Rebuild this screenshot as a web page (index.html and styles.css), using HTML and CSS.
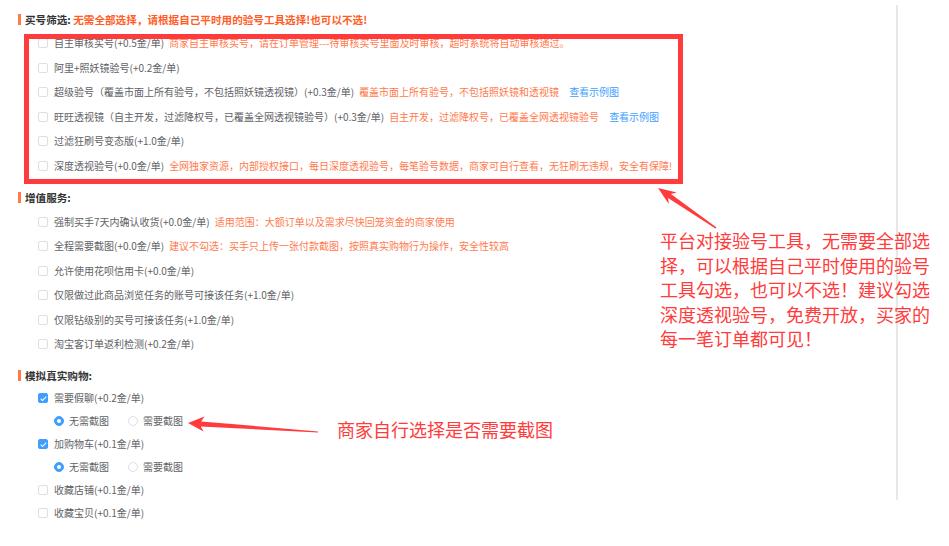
FILE: index.html
```html
<!DOCTYPE html>
<html lang="zh-CN">
<head>
    <meta charset="UTF-8">
    <meta name="viewport" content="width=device-width, initial-scale=1.0">
    <title>任务设置</title>
    <link rel="stylesheet" href="styles.css">
</head>
<body>
    <div class="page">
        <div class="panel">
            <div class="section">
                <div class="section-title">买号筛选: <span class="title-tip">无需全部选择，请根据自己平时用的验号工具选择!也可以不选!</span></div>
                <div class="option"><span class="check"></span><span class="label">自主审核买号(+0.5金/单)</span><span class="note">商家自主审核买号，请在订单管理---待审核买号里面及时审核，超时系统将自动审核通过。</span></div>
                <div class="option"><span class="check"></span><span class="label">阿里+照妖镜验号(+0.2金/单)</span></div>
                <div class="option"><span class="check"></span><span class="label">超级验号（覆盖市面上所有验号，不包括照妖镜透视镜）(+0.3金/单)</span><span class="note">覆盖市面上所有验号，不包括照妖镜和透视镜</span><a class="link" href="#">查看示例图</a></div>
                <div class="option"><span class="check"></span><span class="label">旺旺透视镜（自主开发，过滤降权号，已覆盖全网透视镜验号）(+0.3金/单)</span><span class="note">自主开发，过滤降权号，已覆盖全网透视镜验号</span><a class="link" href="#">查看示例图</a></div>
                <div class="option"><span class="check"></span><span class="label">过滤狂刷号变态版(+1.0金/单)</span></div>
                <div class="option"><span class="check"></span><span class="label">深度透视验号(+0.0金/单)</span><span class="note">全网独家资源，内部授权接口，每日深度透视验号，每笔验号数据，商家可自行查看，无狂刷无违规，安全有保障!</span></div>
            </div>

            <div class="section">
                <div class="section-title">增值服务:</div>
                <div class="option"><span class="check"></span><span class="label">强制买手7天内确认收货(+0.0金/单)</span><span class="note">适用范围：大额订单以及需求尽快回笼资金的商家使用</span></div>
                <div class="option"><span class="check"></span><span class="label">全程需要截图(+0.0金/单)</span><span class="note">建议不勾选：买手只上传一张付款截图，按照真实购物行为操作，安全性较高</span></div>
                <div class="option"><span class="check"></span><span class="label">允许使用花呗信用卡(+0.0金/单)</span></div>
                <div class="option"><span class="check"></span><span class="label">仅限做过此商品浏览任务的账号可接该任务(+1.0金/单)</span></div>
                <div class="option"><span class="check"></span><span class="label">仅限钻级别的买号可接该任务(+1.0金/单)</span></div>
                <div class="option"><span class="check"></span><span class="label">淘宝客订单返利检测(+0.2金/单)</span></div>
            </div>

            <div class="section section-compact">
                <div class="section-title">模拟真实购物:</div>
                <div class="option"><span class="check checked"></span><span class="label">需要假聊(+0.2金/单)</span></div>
                <div class="option radio-row">
                    <span class="radio-item"><span class="radio checked"></span>无需截图</span>
                    <span class="radio-item"><span class="radio"></span>需要截图</span>
                </div>
                <div class="option"><span class="check checked"></span><span class="label">加购物车(+0.1金/单)</span></div>
                <div class="option radio-row">
                    <span class="radio-item"><span class="radio checked"></span>无需截图</span>
                    <span class="radio-item"><span class="radio"></span>需要截图</span>
                </div>
                <div class="option"><span class="check"></span><span class="label">收藏店铺(+0.1金/单)</span></div>
                <div class="option"><span class="check"></span><span class="label">收藏宝贝(+0.1金/单)</span></div>
            </div>
        </div>
        <div class="divider"></div>

        <!-- annotations drawn over the page -->
        <div class="mark-box"></div>
        <div class="callout callout-tools">平台对接验号工具，无需要全部选<br>择，可以根据自己平时使用的验号<br>工具勾选，也可以不选！建议勾选<br>深度透视验号，免费开放，买家的<br>每一笔订单都可见！</div>
        <div class="callout callout-shot">商家自行选择是否需要截图</div>
        <svg class="arrows" width="949" height="546" viewBox="0 0 949 546">
            <polygon points="658,188 676.8,192.4 670.9,193.9 716.6,227.6 715.4,228.4 668.1,198.1 668.8,204" />
            <polygon points="188,423 204.5,416.6 201.2,421.4 318,431.4 318,432.6 200.8,426.4 203.5,431.6" />
        </svg>
    </div>
</body>
</html>
```

FILE: styles.css
```css
body {
    margin: 0;
    background-color: #fff;
    font-family: "Noto Sans CJK SC", "Noto Sans", sans-serif;
    font-size: 10px;
    color: #606266;
}
.page {
    position: relative;
    display: flex;
    width: 949px;
    height: 546px;
    overflow: hidden;
}
.panel {
    width: 896px;
    padding: 7px 0 0 18px;
    box-sizing: border-box;
}
.divider {
    width: 2px;
    height: 495px;
    margin-top: 5px;
    background-color: #e8e8e8;
}
.section + .section {
    margin-top: 7.5px;
}
.section-title {
    display: flex;
    align-items: center;
    height: 24px;
    font-size: 10.6px;
    font-weight: bold;
    color: #333;
    white-space: pre;
}
.section-title::before {
    content: "";
    width: 3px;
    height: 11px;
    margin-right: 4px;
    background-color: #ff7a45;
}
.title-tip {
    color: #ff5c26;
}
.option {
    display: flex;
    align-items: center;
    height: 24.5px;
    padding-left: 20px;
    line-height: 1;
    white-space: nowrap;
}
.section-compact .option {
    height: 23px;
}
.section-compact .section-title {
    height: 22.5px;
}
.check {
    width: 10px;
    height: 10px;
    margin-right: 6px;
    border: 1px solid #dcdfe6;
    border-radius: 2px;
    box-sizing: border-box;
    background-color: #fff;
    position: relative;
}
.check.checked {
    background-color: #409eff;
    border-color: #409eff;
}
.check.checked::after {
    content: "";
    position: absolute;
    left: 2.5px;
    top: 0.5px;
    width: 2px;
    height: 5px;
    border: solid #fff;
    border-width: 0 1px 1px 0;
    transform: rotate(45deg);
}
.note {
    margin-left: 5px;
    color: #ff7a4d;
}
.link {
    margin-left: 10px;
    color: #409eff;
    text-decoration: none;
}
.radio-row {
    padding-left: 36px;
}
.radio-item {
    display: flex;
    align-items: center;
    margin-right: 19px;
}
.radio {
    width: 10px;
    height: 10px;
    margin-right: 5px;
    border: 1px solid #dcdfe6;
    border-radius: 50%;
    box-sizing: border-box;
    background-color: #fff;
    position: relative;
}
.radio.checked {
    background-color: #409eff;
    border-color: #409eff;
}
.radio.checked::after {
    content: "";
    position: absolute;
    left: 2px;
    top: 2px;
    width: 4px;
    height: 4px;
    border-radius: 50%;
    background-color: #fff;
}
.mark-box {
    position: absolute;
    left: 24px;
    top: 34px;
    width: 659px;
    height: 150px;
    border: 5px solid #ff3b3b;
    box-sizing: border-box;
}
.callout {
    position: absolute;
    font-size: 18px;
    line-height: 24.5px;
    color: #ff3b3b;
    white-space: nowrap;
}
.callout-tools {
    left: 660px;
    top: 228px;
}
.callout-shot {
    left: 337px;
    top: 417px;
}
.arrows {
    position: absolute;
    left: 0;
    top: 0;
    fill: #ff3b3b;
}
```
